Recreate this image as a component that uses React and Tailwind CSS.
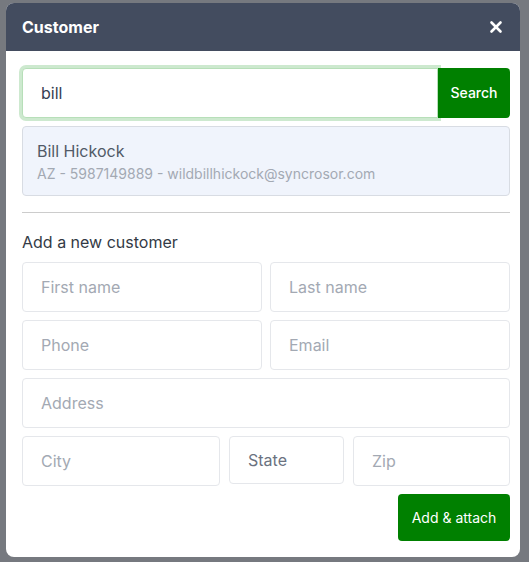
import React from 'react';
import { X } from 'lucide-react';

function Field({ placeholder, className = '' }) {
  return (
    <input
      type="text"
      placeholder={placeholder}
      className={`h-[50px] rounded border border-[#e5e7eb] bg-white px-[18px] text-base text-gray-700 placeholder:text-[#a3a9b3] outline-none ${className}`}
    />
  );
}

export default function App() {
  return (
    <div
      className="relative h-[562px] w-[529px] overflow-hidden bg-[#76797f]"
      style={{ fontFamily: 'Inter, "Noto Sans", sans-serif' }}
    >
      {/* Modal */}
      <div className="ml-[6px] mt-[3px] w-[514px] overflow-hidden rounded-lg bg-white">
        {/* Header */}
        <div className="flex h-12 items-center justify-between bg-[#434c5f] pl-4 pr-[15px]">
          <h2 className="text-base font-bold text-white">Customer</h2>
          <X className="h-[18px] w-[18px] text-white" strokeWidth={3.5} />
        </div>

        {/* Body */}
        <div className="pb-4 pl-4 pr-[10px] pt-[17px]">
          {/* Search */}
          <div className="flex">
            <input
              type="text"
              defaultValue="bill"
              className="h-[50px] flex-1 rounded-l border border-[#b7dfb9] bg-white px-[18px] text-base text-gray-700 outline-none ring-[3px] ring-[#cde9cf]"
            />
            <button className="h-[50px] w-[72px] rounded-r bg-[#008000] text-sm font-medium text-white">
              Search
            </button>
          </div>

          {/* Result */}
          <div className="mt-2 h-[70px] rounded border border-[#d8dce3] bg-[#f0f4fc] px-[14px] pt-[14px]">
            <div className="text-base leading-5 text-[#515a67]">Bill Hickock</div>
            <div className="mt-[3px] text-sm text-[#a3a9b3]">AZ - 5987149889 - wildbillhickock@syncrosor.com</div>
          </div>

          <hr className="mt-4 border-[#cccccc]" />

          <p className="mt-[19px] text-base leading-5 text-[#333a45]">Add a new customer</p>

          <div className="mt-[10px] flex flex-col gap-2">
            <div className="grid grid-cols-2 gap-2">
              <Field placeholder="First name" />
              <Field placeholder="Last name" />
            </div>
            <div className="grid grid-cols-2 gap-2">
              <Field placeholder="Phone" />
              <Field placeholder="Email" />
            </div>
            <Field placeholder="Address" />
            <div className="flex items-start gap-[9px]">
              <Field placeholder="City" className="w-[198px]" />
              <div className="flex h-[48px] w-[115px] items-center rounded border border-[#e5e7eb] px-[18px] text-base text-[#6b7280]">
                State
              </div>
              <Field placeholder="Zip" className="min-w-0 flex-1" />
            </div>
          </div>

          <div className="mt-2 flex justify-end">
            <button className="h-[47px] w-[112px] rounded bg-[#008000] text-sm text-white">
              Add &amp; attach
            </button>
          </div>
        </div>
      </div>
    </div>
  );
}
